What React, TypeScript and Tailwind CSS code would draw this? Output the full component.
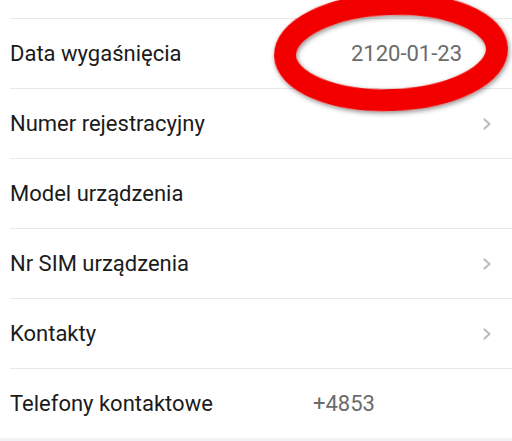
import React from 'react';

type Row = {
  label: string;
  value?: string;
  valueAlign?: 'right' | 'left';
  chevron?: boolean;
};

const rows: Row[] = [
  { label: 'Data wygaśnięcia', value: '2120-01-23', valueAlign: 'right' },
  { label: 'Numer rejestracyjny', chevron: true },
  { label: 'Model urządzenia' },
  { label: 'Nr SIM urządzenia', chevron: true },
  { label: 'Kontakty', chevron: true },
  { label: 'Telefony kontaktowe', value: '+4853', valueAlign: 'left' },
];

function Chevron() {
  return (
    <svg width="10" height="14" viewBox="0 0 10 14" className="shrink-0">
      <polyline points="2.5,2.5 7.5,7 2.5,11.5" fill="none" stroke="#bcbcbc" strokeWidth="2.2" strokeLinecap="round" strokeLinejoin="round" />
    </svg>
  );
}

export default function App() {
  return (
    <div className="relative w-[512px] h-[441px] overflow-hidden bg-white font-['Roboto','Liberation_Sans',sans-serif]">
      <div className="h-[18px]" />
      {rows.map((row) => (
        <div
          key={row.label}
          className="ml-[10px] h-[70px] border-t border-[#e9e9e9] flex items-center text-[22px] text-[#1b1b1b]"
        >
          <span className="w-[303px] shrink-0 whitespace-nowrap">{row.label}</span>
          <div className="flex-1 flex items-center pr-[20px]">
            {row.value && row.valueAlign === 'left' && (
              <span className="text-[#6b6b6b]">{row.value}</span>
            )}
            {row.value && row.valueAlign === 'right' && (
              <span className="ml-auto mr-[30px] text-[#6b6b6b]">{row.value}</span>
            )}
            {row.chevron && (
              <span className="ml-auto">
                <Chevron />
              </span>
            )}
          </div>
        </div>
      ))}
      <div className="h-[4px] bg-[#f1f1f6]" />

      {/* hand-drawn red marker round the date */}
      <svg
        className="absolute left-0 top-0 pointer-events-none"
        width="512"
        height="441"
        viewBox="0 0 512 441"
      >
        <defs>
          <filter id="shadow" x="-20%" y="-40%" width="140%" height="180%">
            <feDropShadow dx="1" dy="2" stdDeviation="2.5" floodColor="#000" floodOpacity="0.45" />
          </filter>
        </defs>
        <ellipse
          cx="391"
          cy="52"
          rx="106"
          ry="48"
          fill="none"
          stroke="#f20000"
          strokeWidth="22"
          transform="rotate(-2 391 52)"
          filter="url(#shadow)"
        />
      </svg>
    </div>
  );
}
